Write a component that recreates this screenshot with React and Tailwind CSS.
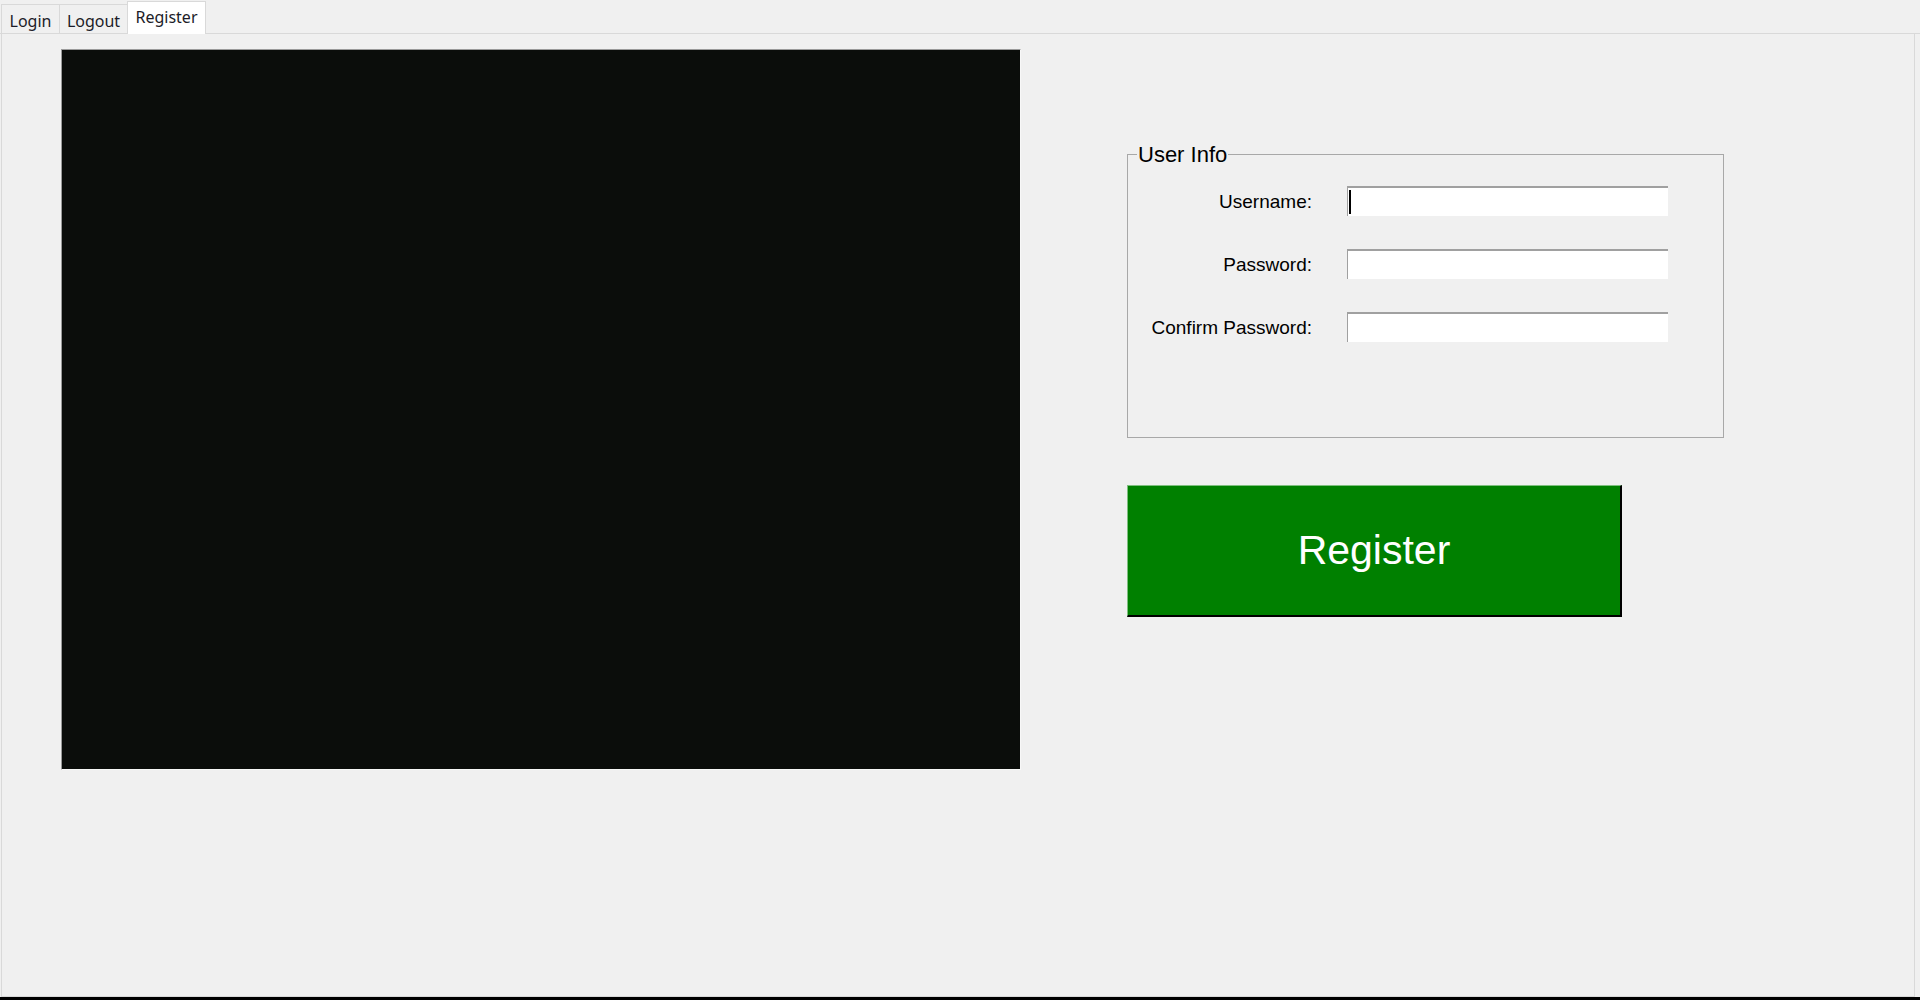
export default function App() {
  const tabs = [
    { label: 'Login', w: 'w-[58px]' },
    { label: 'Logout', w: 'w-[68px]' },
  ]

  return (
    <div className="w-[1920px] h-[1000px] bg-[#f0f0f0] flex flex-col overflow-hidden font-['Liberation_Sans',Arial,sans-serif] text-black">
      {/* tab strip */}
      <div className="h-[34px] flex items-end pl-[1px] border-b border-[#d9d9d9] font-['Noto_Sans',sans-serif] text-[16px] text-[#1c1c28]">
        {tabs.map((t) => (
          <div
            key={t.label}
            className={`${t.w} h-[29px] border-t border-l border-[#d9d9d9] bg-[#f0f0f0] flex items-center justify-center leading-none pt-[3px]`}
          >
            {t.label}
          </div>
        ))}
        <div className="w-[79px] h-[33px] -mb-[1px] border-t border-x border-[#d9d9d9] bg-white flex items-center justify-center leading-none pb-[3px]">
          Register
        </div>
      </div>

      {/* page */}
      <div className="flex-1 ml-[1px] w-[1914px] border-x border-b border-[#d9d9d9]">
        <div className="flex pl-[59px] pt-[15px] gap-[106px]">
          {/* camera preview */}
          <div className="w-[960px] h-[721px] shrink-0 bg-[#0b0d0b] border-t border-l border-[#9a9a9a] border-r border-b border-r-[#f8f8f8] border-b-[#f8f8f8]" />

          <div className="flex flex-col mt-[105px]">
            {/* User Info group */}
            <div className="relative w-[597px] h-[284px] border border-[#a8a8a8] pt-[31px]">
              <span className="absolute left-[9px] -top-[13px] px-[1px] bg-[#f0f0f0] text-[22px] leading-[26px]">
                User Info
              </span>
              <div className="grid grid-cols-[184px_321px] gap-x-[35px] gap-y-[33px] items-center">
                <label className="text-right text-[19px] leading-none">Username:</label>
                <div className="h-[30px] bg-white border-t-2 border-l border-[#a0a0a0] flex items-center pl-[1px]">
                  <div className="w-[2px] h-[24px] bg-black" />
                </div>
                <label className="text-right text-[19px] leading-none">Password:</label>
                <div className="h-[30px] bg-white border-t-2 border-l border-[#a0a0a0]" />
                <label className="text-right text-[19px] leading-none">Confirm Password:</label>
                <div className="h-[30px] bg-white border-t-2 border-l border-[#a0a0a0]" />
              </div>
            </div>

            {/* action */}
            <button className="mt-[47px] w-[495px] h-[132px] bg-[#008000] text-white text-[41px] leading-none border-t border-l border-[#7fbf7f] border-r-2 border-b-2 border-r-black border-b-black">
              Register
            </button>
          </div>
        </div>
      </div>

      <div className="h-[3px] bg-black shrink-0" />
    </div>
  )
}
